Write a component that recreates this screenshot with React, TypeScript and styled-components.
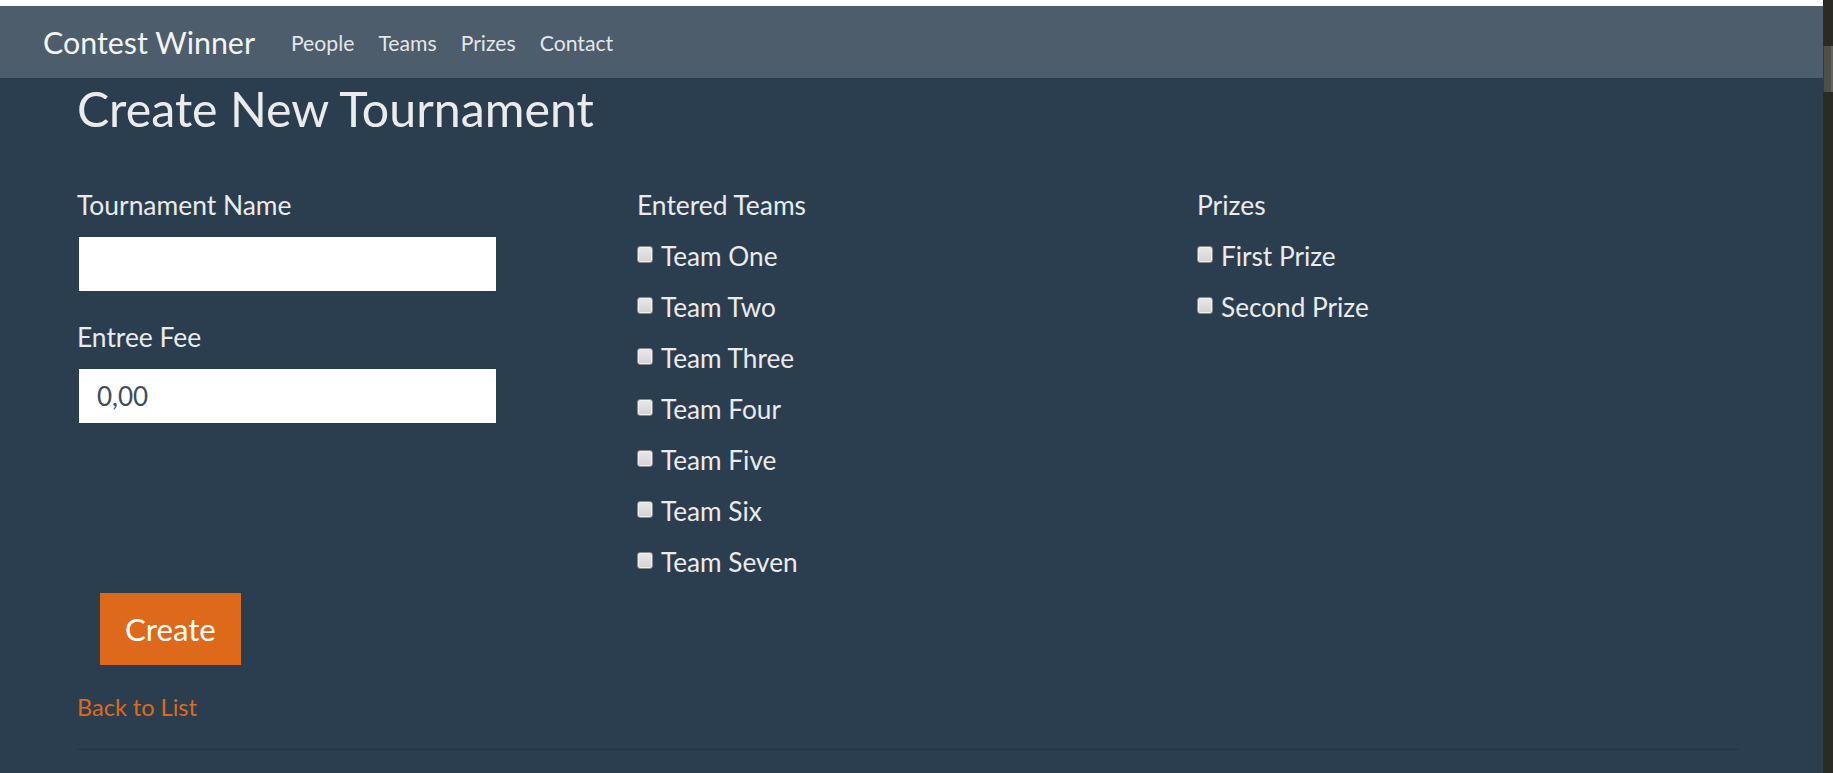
import React from "react";
import styled, { createGlobalStyle } from "styled-components";

const GlobalStyle = createGlobalStyle`
  html, body {
    margin: 0;
    padding: 0;
    background: #2b3e50;
    font-family: Lato, "Open Sans", "Liberation Sans", sans-serif;
    color: #ebebeb;
    overflow: hidden;
  }
  * { box-sizing: border-box; }
`;

const Page = styled.div`
  display: flex;
  width: 1833px;
  height: 773px;
  overflow: hidden;
`;

const Main = styled.div`
  flex: 1;
  display: flex;
  flex-direction: column;
  min-width: 0;
`;

const TopStrip = styled.div`
  height: 6px;
  background: #ffffff;
`;

const Navbar = styled.nav`
  height: 72px;
  background: #4e5d6c;
  display: flex;
  align-items: center;
  padding-left: 43px;
`;

const Brand = styled.a`
  font-size: 30.4px;
  color: #f4f4f4;
  text-decoration: none;
`;

const NavLinks = styled.ul`
  display: flex;
  gap: 24px;
  list-style: none;
  margin: 0 0 0 36px;
  padding: 1px 0 0 0;
`;

const NavLink = styled.a`
  font-size: 21.2px;
  color: #e3e6e9;
  text-decoration: none;
`;

const Content = styled.main`
  padding: 4px 0 0 77px;
  width: 1739px;
`;

const Heading = styled.h1`
  margin: 0;
  font-size: 48.3px;
  line-height: 53px;
  font-weight: 400;
  color: #ebebeb;
`;

const FormGrid = styled.div`
  display: grid;
  grid-template-columns: repeat(3, 1fr);
  column-gap: 18px;
  margin-top: 52px;
`;

const Column = styled.div`
  display: flex;
  flex-direction: column;
`;

const Label = styled.label<{ $spaced?: boolean }>`
  font-size: 26.4px;
  line-height: 36px;
  color: #ebebeb;
  margin-top: ${(p) => (p.$spaced ? "28px" : "0")};
`;

const TextInput = styled.input`
  width: 417px;
  height: 54px;
  margin: 14px 0 0 2px;
  border: none;
  background: #ffffff;
  padding: 0 18px;
  font-family: Lato, "Liberation Sans", sans-serif;
  font-size: 26px;
  color: #3e4d5c;
  outline: none;
`;

const CheckList = styled.div`
  display: flex;
  flex-direction: column;
  margin-top: 7px;
`;

const CheckRow = styled.label`
  display: flex;
  align-items: center;
  height: 51px;
  font-size: 26.2px;
  color: #ebebeb;
`;

const Box = styled.input.attrs({ type: "checkbox" })`
  appearance: none;
  width: 16px;
  height: 17px;
  margin: 0 8px 2px 0;
  border: 1px solid #8a8a8a;
  border-radius: 3px;
  background: linear-gradient(#e9e9e9, #d2d2d2);
  box-shadow: inset 0 0 0 1px #f0f0f0;
  flex-shrink: 0;
`;

const ButtonRow = styled.div`
  display: flex;
`;

const CreateButton = styled.button`
  margin: 6px 0 0 23px;
  height: 72px;
  padding: 0 25px;
  border: none;
  background: #df691a;
  color: #ffffff;
  font-family: Lato, "Liberation Sans", sans-serif;
  font-size: 31.2px;
  cursor: pointer;
`;

const BackLink = styled.a`
  display: block;
  margin-top: 25px;
  font-size: 23.5px;
  line-height: 34px;
  color: #df691a;
  text-decoration: none;
`;

const Rule = styled.hr`
  margin: 25px 0 0 0;
  border: none;
  border-top: 1px solid rgba(0, 0, 0, 0.12);
  width: 1662px;
`;

const Scrollbar = styled.div`
  width: 10px;
  background: #2b2b21;
  padding-top: 46px;
  flex-shrink: 0;
`;

const Thumb = styled.div`
  height: 46px;
  background: #505048;
  border-left: 1px solid #3a3a32;
  border-right: 2px solid #64645c;
`;

const teams = ["Team One", "Team Two", "Team Three", "Team Four", "Team Five", "Team Six", "Team Seven"];
const prizes = ["First Prize", "Second Prize"];

export default function App() {
  return (
    <>
      <GlobalStyle />
      <Page>
        <Main>
          <TopStrip />
          <Navbar>
            <Brand href="#">Contest Winner</Brand>
            <NavLinks>
              {["People", "Teams", "Prizes", "Contact"].map((l) => (
                <li key={l}>
                  <NavLink href="#">{l}</NavLink>
                </li>
              ))}
            </NavLinks>
          </Navbar>
          <Content>
            <Heading>Create New Tournament</Heading>
            <FormGrid>
              <Column>
                <Label>Tournament Name</Label>
                <TextInput type="text" />
                <Label $spaced>Entree Fee</Label>
                <TextInput type="text" defaultValue="0,00" />
              </Column>
              <Column>
                <Label>Entered Teams</Label>
                <CheckList>
                  {teams.map((t) => (
                    <CheckRow key={t}>
                      <Box />
                      {t}
                    </CheckRow>
                  ))}
                </CheckList>
              </Column>
              <Column>
                <Label>Prizes</Label>
                <CheckList>
                  {prizes.map((t) => (
                    <CheckRow key={t}>
                      <Box />
                      {t}
                    </CheckRow>
                  ))}
                </CheckList>
              </Column>
            </FormGrid>
            <ButtonRow>
              <CreateButton type="button">Create</CreateButton>
            </ButtonRow>
            <BackLink href="#">Back to List</BackLink>
            <Rule />
          </Content>
        </Main>
        <Scrollbar>
          <Thumb />
        </Scrollbar>
      </Page>
    </>
  );
}
